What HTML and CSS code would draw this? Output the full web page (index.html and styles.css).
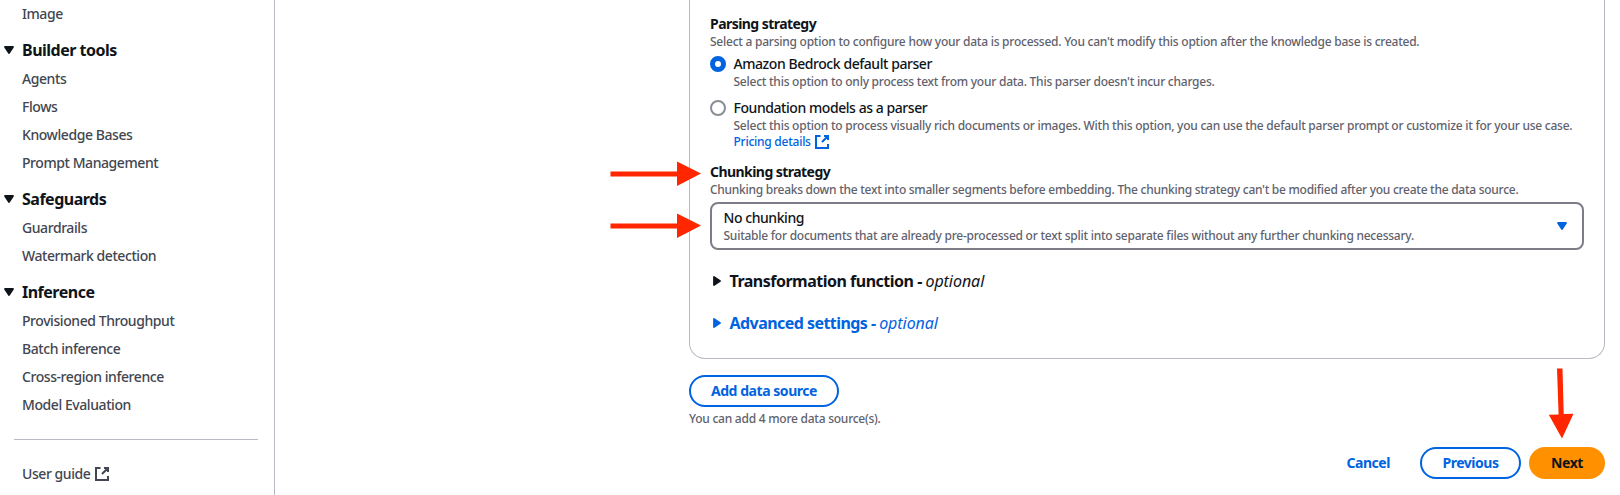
FILE: index.html
```html
<!DOCTYPE html>
<html lang="en">
<head>
<meta charset="utf-8">
<title>Create knowledge base</title>
<link rel="stylesheet" href="styles.css">
</head>
<body>
<svg class="defs" width="0" height="0" aria-hidden="true">
  <symbol id="external" viewBox="0 0 16 16"><path d="M6.500 2H2v12h12v-4M10 2h4v4M8 8l5.500-5.500" fill="none" stroke="currentColor" stroke-width="2"/></symbol>
  <symbol id="caret" viewBox="0 0 16 16"><path d="M4 5h8l-4 6z" fill="currentColor" stroke="currentColor" stroke-width="1.8" stroke-linejoin="round"/></symbol>
</svg>
<div class="app">
  <nav class="sidebar">
    <a class="item">Image</a>
    <div class="section"><svg class="caret"><use href="#caret"/></svg>Builder tools</div>
    <a class="item">Agents</a>
    <a class="item">Flows</a>
    <a class="item">Knowledge Bases</a>
    <a class="item">Prompt Management</a>
    <div class="section"><svg class="caret"><use href="#caret"/></svg>Safeguards</div>
    <a class="item">Guardrails</a>
    <a class="item">Watermark detection</a>
    <div class="section"><svg class="caret"><use href="#caret"/></svg>Inference</div>
    <a class="item">Provisioned Throughput</a>
    <a class="item">Batch inference</a>
    <a class="item">Cross-region inference</a>
    <a class="item">Model Evaluation</a>
    <hr class="divider">
    <a class="item guide">User guide<svg class="icon"><use href="#external"/></svg></a>
  </nav>
  <main class="main">
    <section class="panel">
      <h3 class="label">Parsing strategy</h3>
      <p class="desc">Select a parsing option to configure how your data is processed. You can't modify this option after the knowledge base is created.</p>
      <div class="option">
        <span class="radio checked"></span>
        <div>
          <div class="name">Amazon Bedrock default parser</div>
          <p class="desc">Select this option to only process text from your data. This parser doesn't incur charges.</p>
        </div>
      </div>
      <div class="option second">
        <span class="radio"></span>
        <div>
          <div class="name">Foundation models as a parser</div>
          <p class="desc">Select this option to process visually rich documents or images. With this option, you can use the default parser prompt or customize it for your use case.</p>
          <a class="desc link">Pricing details<svg class="icon"><use href="#external"/></svg></a>
        </div>
      </div>
      <h3 class="label chunking">Chunking strategy</h3>
      <p class="desc tight">Chunking breaks down the text into smaller segments before embedding. The chunking strategy can't be modified after you create the data source.</p>
      <div class="select">
        <div>
          <div class="name">No chunking</div>
          <p class="desc">Suitable for documents that are already pre-processed or text split into separate files without any further chunking necessary.</p>
        </div>
        <svg class="caret blue"><use href="#caret"/></svg>
      </div>
      <div class="expander"><svg class="caret right"><use href="#caret"/></svg><span>Transformation function - <i>optional</i></span></div>
      <div class="expander blue"><svg class="caret right"><use href="#caret"/></svg><span>Advanced settings - <i>optional</i></span></div>
    </section>
    <button class="btn add">Add data source</button>
    <p class="desc note">You can add 4 more data source(s).</p>
    <div class="actions">
      <button class="btn plain">Cancel</button>
      <button class="btn previous">Previous</button>
      <button class="btn primary">Next</button>
    </div>
  </main>
</div>
<svg class="arrows" width="1620" height="495" fill="#ff2600">
  <path id="arrow" d="M610.500 171.500H677V161.500L701 173.500L677 186V176.500H610.500z"/>
  <use href="#arrow" y="52"/>
  <path d="M1557 368.500L1562.500 368.400L1563.700 414L1573.500 413.800L1562 438.500L1548.800 414.800L1558.600 414.400z"/>
</svg>
</body>
</html>
```
FILE: styles.css
```css
* { box-sizing: border-box; }
body {
  margin: 0;
  background: #fff;
  color: #0f141a;
  font: 500 14px/20px "Noto Sans", "Open Sans", sans-serif;
  letter-spacing: -0.43px;
  overflow: hidden;
}
p, h3 { margin: 0; }
.defs { display: block; }
.app { display: flex; height: 495px; }
.sidebar { width: 275px; border-right: 1px solid #b9bac4; flex: none; }
.item {
  display: flex;
  height: 28px;
  padding: 4px 0 4px 22px;
  color: #424650;
}
.section {
  display: flex;
  align-items: center;
  height: 37px;
  padding: 11px 0 4px 1px;
  gap: 5px;
  font-size: 16px;
  line-height: 22px;
  font-weight: 700;
  letter-spacing: -0.5px;
}
.caret { width: 16px; height: 16px; flex: none; }
.divider { margin: 20px 16px 20px 14px; border: 0; border-top: 1px solid #b9bac4; }
.icon { width: 16px; height: 16px; flex: none; }
.guide { gap: 4px; align-items: center; }
.main { width: 916px; margin-left: 414px; }
.panel {
  height: 359px;
  padding: 14px 20px 0;
  border: 1px solid #b9bac4;
  border-top: 0;
  border-radius: 0 0 16px 16px;
}
.label { font-size: 14px; line-height: 20px; font-weight: 700; letter-spacing: -0.55px; }
.desc {
  font-size: 12px;
  line-height: 16px;
  font-weight: 500;
  letter-spacing: -0.245px;
  color: #5f626c;
  white-space: nowrap;
}
.desc.tight { letter-spacing: -0.268px; }
.name { letter-spacing: -0.44px; }
.option { display: flex; gap: 7.5px; margin-top: 4px; }
.option.second { margin-top: 8px; }
.radio { width: 16px; height: 16px; margin-top: 2px; border: 2px solid #8c8c94; border-radius: 50%; flex: none; }
.radio.checked { border: 5px solid #0063e0; }
.link { display: flex; gap: 3px; color: #0063e0; letter-spacing: -0.25px; }
.chunking { margin-top: 12px; }
.select {
  display: flex;
  justify-content: space-between;
  align-items: center;
  height: 48px;
  margin-top: 4px;
  padding: 0 12px 0 11.5px;
  border: 2px solid #7d7d87;
  border-radius: 8px;
}
.blue { color: #0063e0; }
.expander {
  display: flex;
  align-items: center;
  gap: 4.5px;
  height: 24px;
  margin: 19px 0 0 -1px;
  font-size: 16px;
  font-weight: 700;
  letter-spacing: -0.5px;
}
.expander i { font-weight: 400; letter-spacing: -0.05px; }
.expander.blue { margin-top: 18px; letter-spacing: -0.55px; }
.right { transform: rotate(-90deg); }
.btn {
  height: 32px;
  padding: 0 20px;
  border: 2px solid #0063e0;
  border-radius: 16px;
  background: #fff;
  color: #0063e0;
  font: 700 14px/20px "Noto Sans", "Open Sans", sans-serif;
  letter-spacing: -0.45px;
  white-space: nowrap;
}
.add { display: block; width: 150px; margin-top: 16px; padding: 0; }
.note { margin-top: 4px; }
.actions { display: flex; justify-content: flex-end; gap: 8px; margin-top: 20px; }
.plain { border-color: transparent; background: transparent; }
.previous { width: 101px; }
.primary { width: 76px; border-color: #ff9000; background: #ff9000; color: #0f141a; }
.arrows { position: absolute; left: 0; top: 0; pointer-events: none; }
```
